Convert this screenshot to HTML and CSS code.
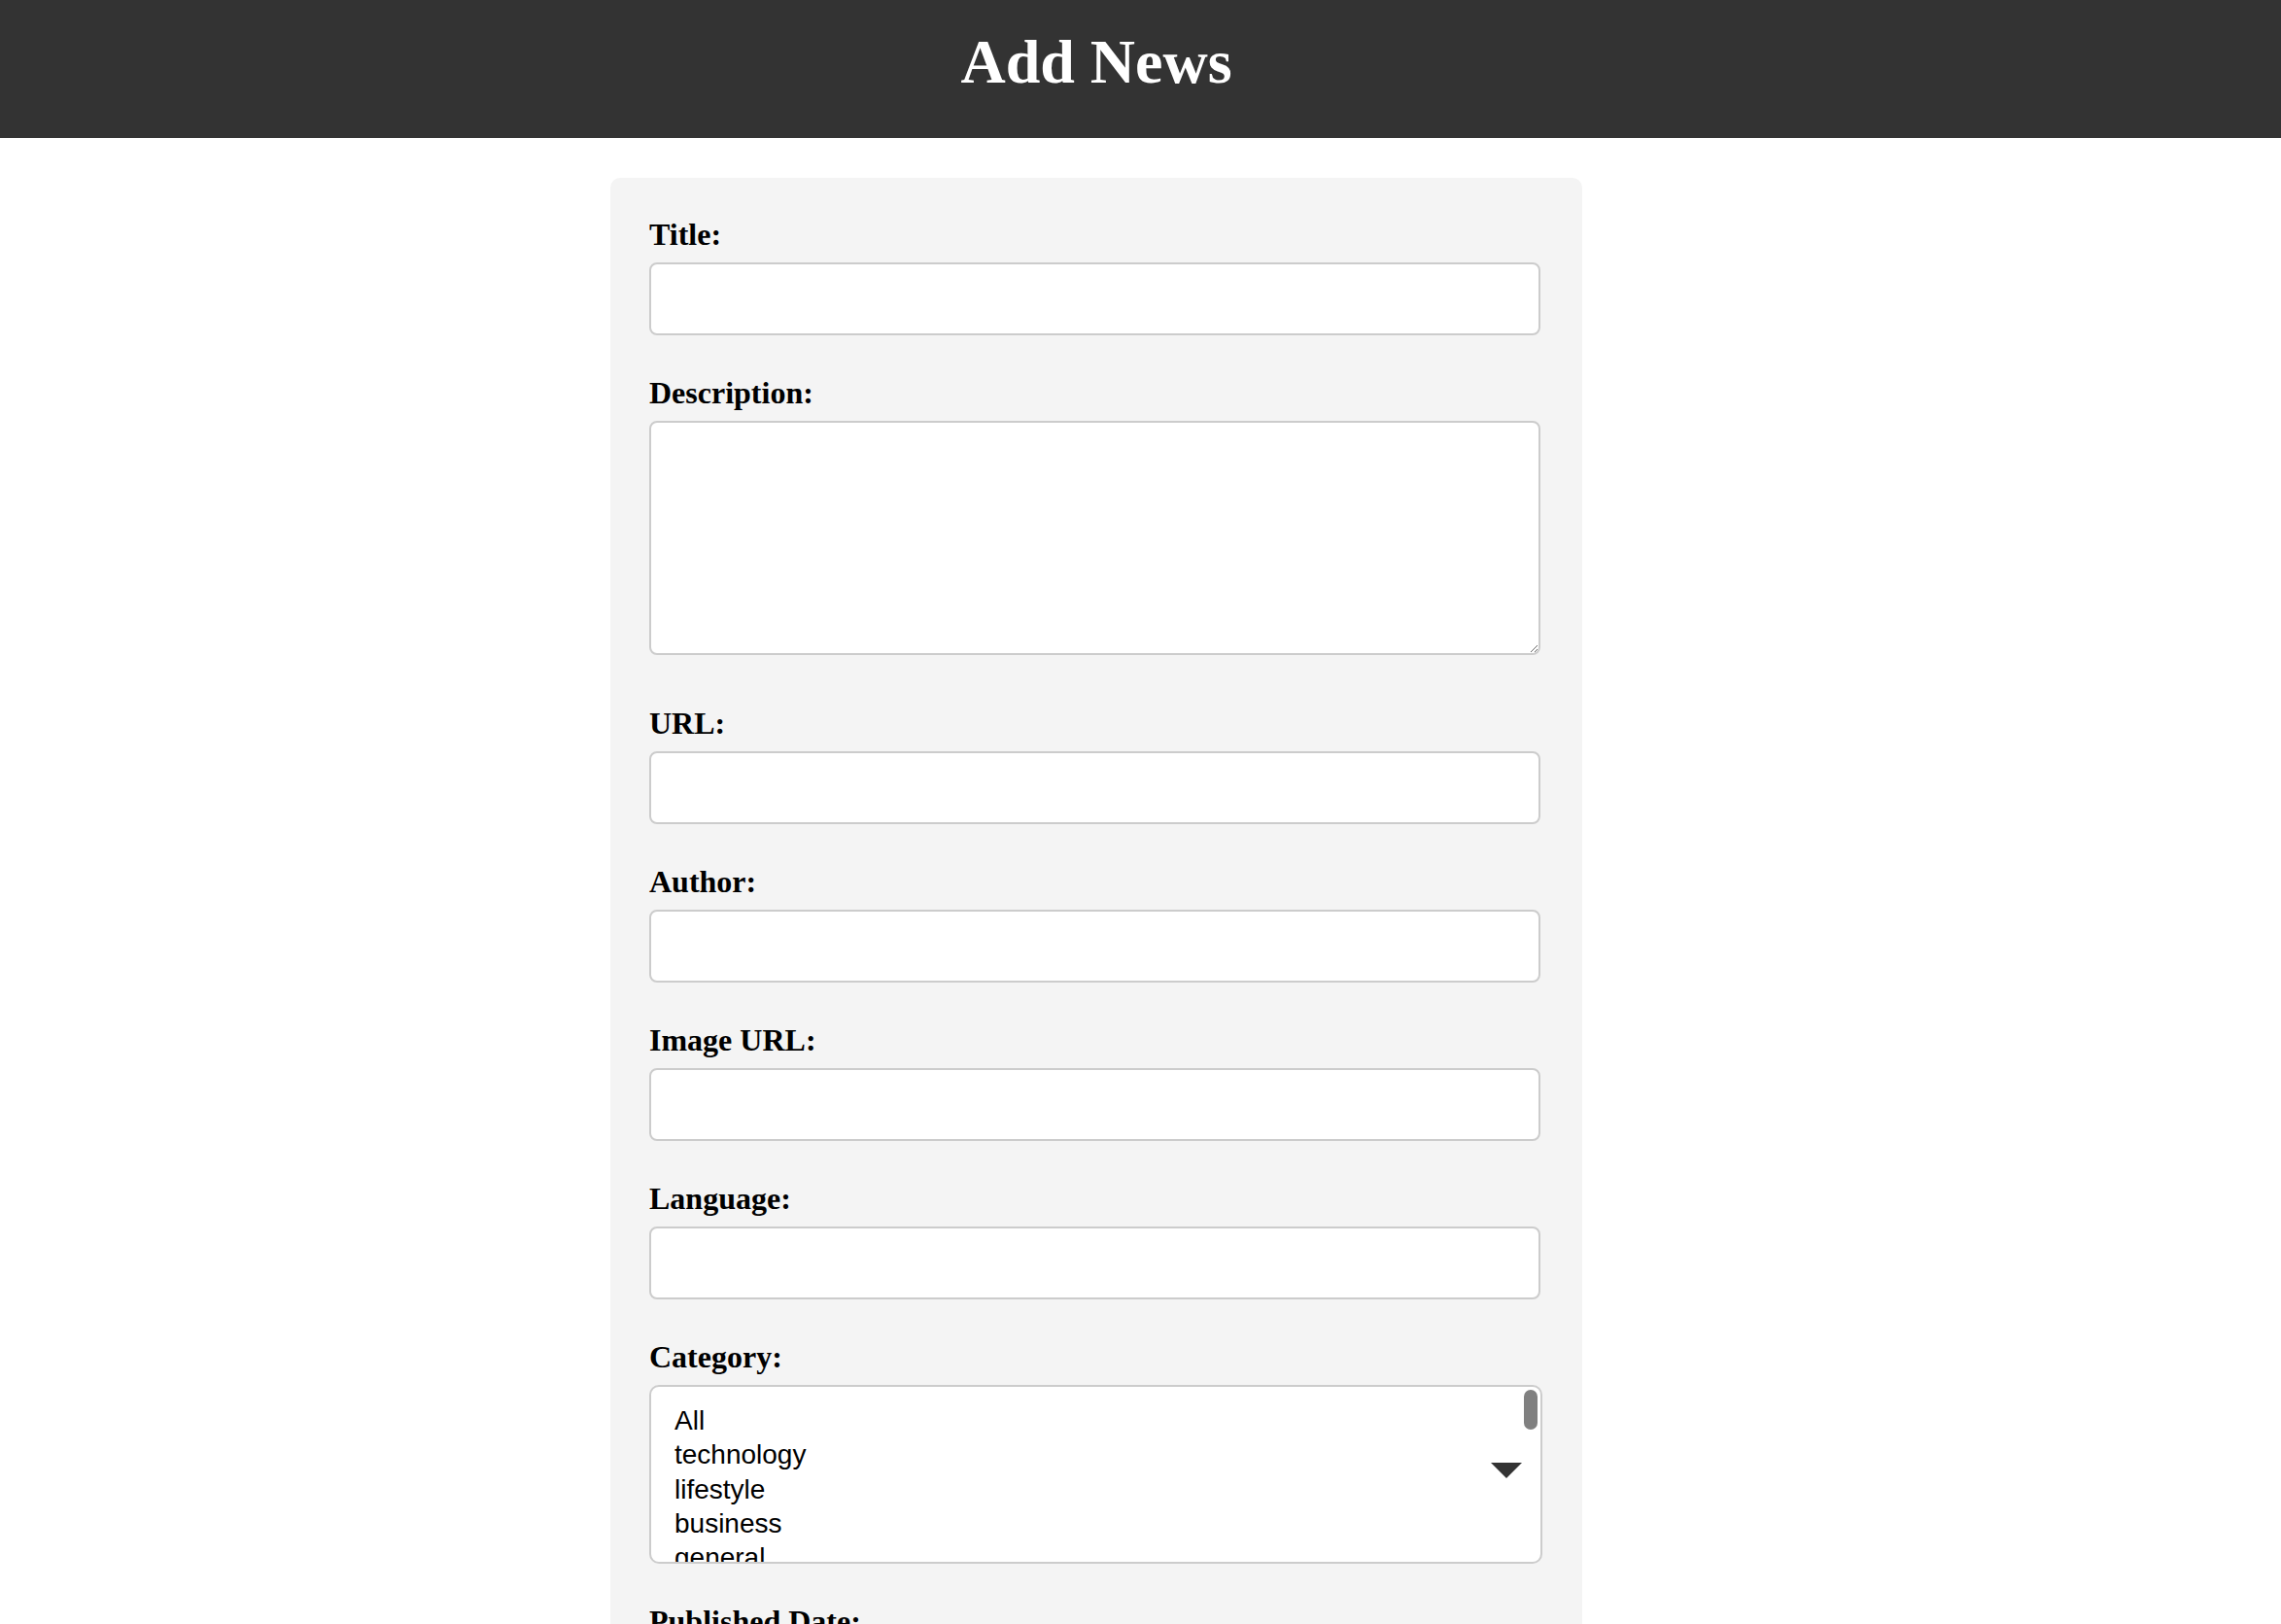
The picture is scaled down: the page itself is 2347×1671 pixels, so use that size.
FILE: index.html
```html
<!DOCTYPE html>
<html lang="en">
<head>
<meta charset="utf-8">
<title>Add News</title>
<link rel="stylesheet" href="styles.css">
</head>
<body>
<header class="site-header">
  <h1 class="page-title">Add News</h1>
</header>
<main class="page">
  <form class="news-form">
    <label class="field-label" for="title">Title:</label>
    <input class="field-input" type="text" id="title" name="title">

    <label class="field-label" for="description">Description:</label>
    <textarea class="field-textarea" id="description" name="description"></textarea>

    <label class="field-label" for="url">URL:</label>
    <input class="field-input" type="text" id="url" name="url">

    <label class="field-label" for="author">Author:</label>
    <input class="field-input" type="text" id="author" name="author">

    <label class="field-label" for="image">Image URL:</label>
    <input class="field-input" type="text" id="image" name="image">

    <label class="field-label" for="language">Language:</label>
    <input class="field-input" type="text" id="language" name="language">

    <label class="field-label" id="category-label">Category:</label>
    <div class="listbox" role="listbox" aria-labelledby="category-label">
      <div class="listbox-option" role="option">All</div>
      <div class="listbox-option" role="option">technology</div>
      <div class="listbox-option" role="option">lifestyle</div>
      <div class="listbox-option" role="option">business</div>
      <div class="listbox-option" role="option">general</div>
      <div class="listbox-option" role="option">programming</div>
      <div class="listbox-option" role="option">science</div>
      <span class="listbox-thumb"></span>
      <span class="listbox-arrow"></span>
    </div>

    <label class="field-label" for="published">Published Date:</label>
    <input class="field-input" type="text" id="published" name="published">
  </form>
</main>
</body>
</html>
```

FILE: styles.css
```css
html, body {
  margin: 0;
  padding: 0;
  background: #ffffff;
  font-family: "Liberation Serif", "Times New Roman", serif;
  color: #000000;
}

.site-header {
  background: #333333;
  padding: 28px 0 43px;
}

.page-title {
  width: 2256px;
  margin: 0;
  text-align: center;
  color: #ffffff;
  font-family: "Liberation Serif", "Times New Roman", serif;
  font-weight: bold;
  font-size: 64px;
  line-height: 71px;
}

.page {
  width: 2256px;
}

.news-form {
  box-sizing: border-box;
  width: 1000px;
  margin: 41px auto 0;
  padding: 40px;
  background: #f4f4f4;
  border-radius: 10px;
}

.field-label {
  display: block;
  margin-bottom: 11px;
  font-family: "Liberation Serif", "Times New Roman", serif;
  font-weight: bold;
  font-size: 32px;
  line-height: 36px;
}

.field-input {
  display: block;
  box-sizing: border-box;
  width: 917px;
  height: 75px;
  margin: 0 0 41px;
  padding: 0 16px;
  border: 2px solid #cccccc;
  border-radius: 8px;
  background: #ffffff;
  font-family: "Liberation Sans", Arial, sans-serif;
  font-size: 28px;
}

.field-textarea {
  display: block;
  box-sizing: border-box;
  width: 917px;
  height: 241px;
  margin: 0 0 52px;
  padding: 16px;
  border: 2px solid #cccccc;
  border-radius: 8px;
  background: #ffffff;
  font-family: "Liberation Sans", Arial, sans-serif;
  font-size: 28px;
}

.listbox {
  position: relative;
  box-sizing: border-box;
  width: 919px;
  height: 184px;
  margin: 0 0 41px;
  padding: 17px 0 0 24px;
  border: 2px solid #cccccc;
  border-radius: 10px;
  background: #ffffff;
  overflow: hidden;
  font-family: "Liberation Sans", Arial, sans-serif;
  font-size: 28px;
  line-height: 35.3px;
  color: #000000;
}

.listbox-option {
  white-space: nowrap;
}

.listbox-thumb {
  position: absolute;
  top: 3px;
  right: 3px;
  width: 14px;
  height: 41px;
  border-radius: 7px;
  background: #808080;
}

.listbox-arrow {
  position: absolute;
  top: 78px;
  right: 19px;
  width: 0;
  height: 0;
  border-left: 16px solid transparent;
  border-right: 16px solid transparent;
  border-top: 16px solid #333333;
}
```
